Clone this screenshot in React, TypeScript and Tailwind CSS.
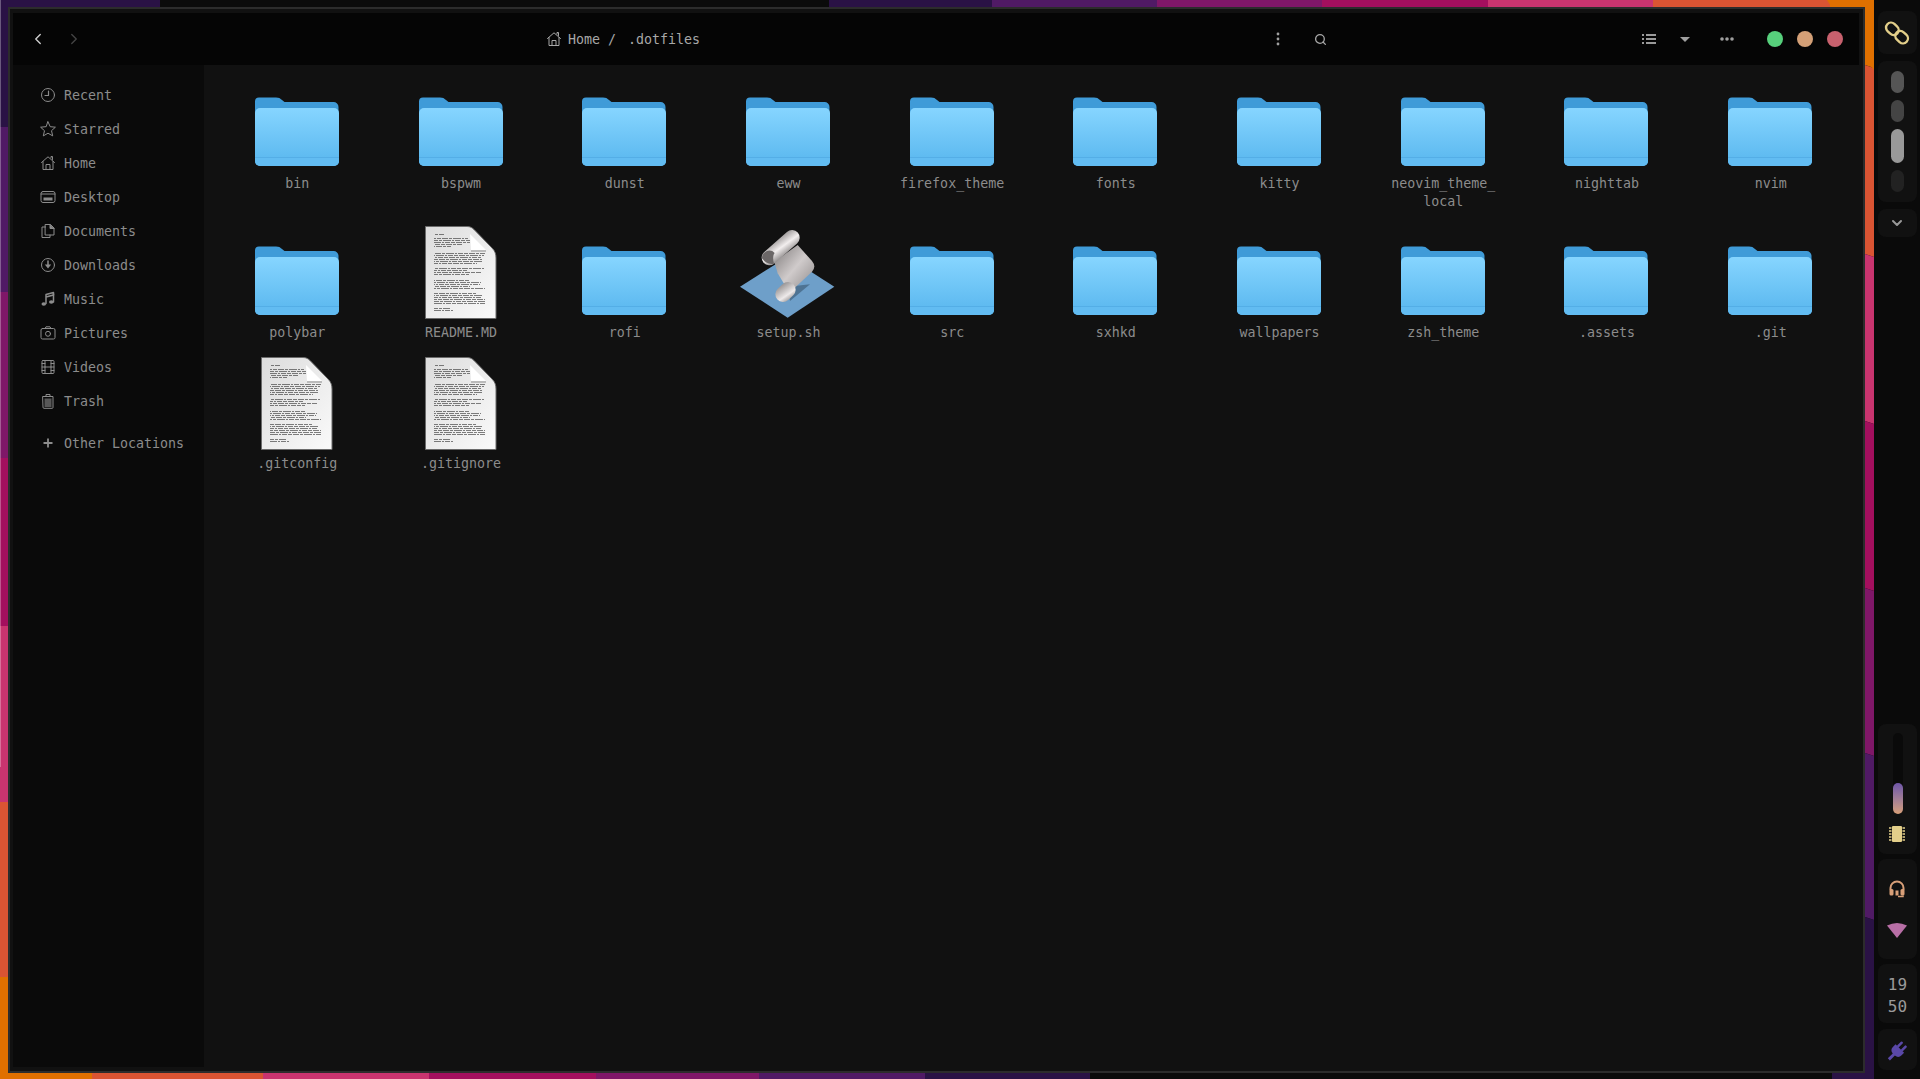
import { useId, type ReactNode } from "react";
import { ChevronDown, ChevronLeft, ChevronRight, Search } from "lucide-react";

const mono = "font-['DejaVu_Sans_Mono','Liberation_Mono',monospace]";

const C = {
  dark: "#2a1245",
  purple: "#501a65",
  magenta: "#7f1768",
  crimson: "#a30f5e",
  pink: "#c9346f",
  red: "#da5433",
  orange: "#e07000",
  black: "#0b0b0b",
};

// only the edges of the wallpaper show round the window
function Wallpaper() {
  const top: [number, number, string][] = [
    [0, 160, C.dark],
    [160, 829, C.black],
    [829, 992, C.dark],
    [992, 1157, C.purple],
    [1157, 1322, C.magenta],
    [1322, 1488, C.crimson],
    [1488, 1653, C.pink],
    [1653, 1830, C.red],
    [1830, 1874, C.orange],
  ];
  const bottom: [number, number, string][] = [
    [0, 92, C.orange],
    [92, 263, C.red],
    [263, 429, C.pink],
    [429, 596, C.crimson],
    [596, 759, C.magenta],
    [759, 925, C.purple],
    [925, 1090, C.dark],
    [1090, 1832, C.black],
    [1832, 1874, C.dark],
  ];
  const left: [number, number, string][] = [
    [0, 127, C.dark],
    [127, 292, C.purple],
    [292, 458, C.magenta],
    [458, 626, C.crimson],
    [626, 802, C.pink],
    [802, 977, C.red],
    [977, 1079, C.orange],
  ];
  const right: [number, number, string][] = [
    [0, 67, C.orange],
    [67, 256, C.red],
    [256, 423, C.pink],
    [423, 590, C.crimson],
    [590, 755, C.magenta],
    [755, 919, C.purple],
    [919, 1079, C.dark],
  ];
  return (
    <svg className="absolute inset-0" width={1920} height={1079} aria-hidden>
      {top.map(([a, b, f]) => (
        <rect key={a} x={a} y={0} width={b - a} height={8} fill={f} />
      ))}
      {bottom.map(([a, b, f]) => (
        <rect key={a} x={a} y={1071} width={b - a} height={8} fill={f} />
      ))}
      {left.map(([a, b, f]) => (
        <rect key={a} x={0} y={a} width={9} height={b - a} fill={f} />
      ))}
      {right.map(([a, b, f]) => (
        <polygon
          key={a}
          points={`1865,${a - 2} 1874,${a + 1} 1874,${b + 1} 1865,${b - 2}`}
          fill={f}
        />
      ))}
      <polygon points="1827,0 1874,0 1874,70 1864,58" fill={C.orange} />
      <rect x={0} y={0} width={1} height={767} fill="#fff" fillOpacity={0.3} />
    </svg>
  );
}

function Ico({ children }: { children: ReactNode }) {
  return (
    <svg
      width={16}
      height={16}
      viewBox="0 0 16 16"
      fill="none"
      stroke="currentColor"
      strokeWidth={1}
      strokeLinejoin="round"
      strokeLinecap="round"
      aria-hidden
    >
      {children}
    </svg>
  );
}

const HomeIcon = (
  <Ico>
    <path d="M1.5 7.5 8 1.8l6.5 5.7M3 6.500v8h10v-8M6 14.500V9.500h4v5M11 3V1.500h1.500v3" />
  </Ico>
);

const sidebarTop: { label: string; icon: ReactNode }[] = [
  {
    label: "Recent",
    icon: (
      <Ico>
        <circle cx={8} cy={8} r={6.5} />
        <path d="M8.500 4v4.500H5" strokeWidth={1.2} />
      </Ico>
    ),
  },
  {
    label: "Starred",
    icon: (
      <Ico>
        <path d="M8 .8l2.200 4.900 5.200.5-3.900 3.500 1.200 5.200L8 12.200l-4.700 2.700 1.200-5.200L.6 6.200l5.200-.5z" />
      </Ico>
    ),
  },
  { label: "Home", icon: HomeIcon },
  {
    label: "Desktop",
    icon: (
      <Ico>
        <rect x={1} y={2.500} width={14} height={11} rx={2} />
        <path d="M1 5h14" />
        <rect x={3.500} y={8.500} width={9} height={3} fill="currentColor" stroke="none" />
      </Ico>
    ),
  },
  {
    label: "Documents",
    icon: (
      <Ico>
        <path d="M5.500 4H2v10.500h8V12" />
        <path d="M5.500 1.500h5l3.500 3.500v7H5.500z" />
        <path d="M10 1.500V5.500h4" fill="currentColor" />
      </Ico>
    ),
  },
  {
    label: "Downloads",
    icon: (
      <Ico>
        <circle cx={8} cy={8} r={6.500} />
        <path d="M8 4v4.500" strokeWidth={1.500} />
        <path d="M4.800 7.500h6.400L8 11.500z" fill="currentColor" stroke="none" />
      </Ico>
    ),
  },
  {
    label: "Music",
    icon: (
      <Ico>
        <path d="M6 12.500V3.500l7.500-2v2.500L6 6" strokeWidth={1.500} />
        <path d="M13.500 3v8" strokeWidth={1.500} />
        <ellipse cx={3.800} cy={13} rx={2.300} ry={1.800} fill="currentColor" stroke="none" />
        <ellipse cx={11.300} cy={11} rx={2.300} ry={1.800} fill="currentColor" stroke="none" />
      </Ico>
    ),
  },
  {
    label: "Pictures",
    icon: (
      <Ico>
        <rect x={1} y={3.500} width={14} height={10.500} rx={1.500} />
        <path d="M5 3.500 6 1.800h4l1 1.700" />
        <circle cx={8} cy={8.800} r={2.500} />
      </Ico>
    ),
  },
  {
    label: "Videos",
    icon: (
      <Ico>
        <rect x={2} y={1.500} width={12} height={13} rx={1} />
        <path d="M5 1.500v13M11 1.500v13M5 8h6M2 4.500h3M2 8h3M2 11.500h3M11 4.500h3M11 8h3M11 11.500h3" />
      </Ico>
    ),
  },
  {
    label: "Trash",
    icon: (
      <Ico>
        <path d="M3 3.500h10v11a.8.8 0 0 1-.8.8H3.800a.8.8 0 0 1-.8-.8zM6 3.500V1.500h4v2" />
        <rect x={4.500} y={5.500} width={7} height={8.500} fill="currentColor" fillOpacity={0.6} stroke="none" />
      </Ico>
    ),
  },
];

function Sidebar() {
  return (
    <aside className={`flex w-[191px] shrink-0 flex-col bg-[#0a0a0a] pt-[13px] text-[13.3px] leading-[20px] text-[#8c8c8c] ${mono}`}>
      {sidebarTop.map((s) => (
        <div key={s.label} className="flex h-[34px] items-center">
          <span className="ml-[27px] flex w-[24px] shrink-0">{s.icon}</span>
          <span className="pt-[2px]">{s.label}</span>
        </div>
      ))}
      <div className="mt-[8px] flex h-[34px] items-center">
        <span className="ml-[27px] flex w-[24px] shrink-0">
          <Ico>
            <path d="M8 3.500v9M3.500 8h9" strokeWidth={1.800} strokeLinecap="butt" />
          </Ico>
        </span>
        <span className="pt-[2px]">Other Locations</span>
      </div>
    </aside>
  );
}

function Folder() {
  const id = useId();
  return (
    <svg width={96} height={96} viewBox="0 0 96 96" aria-hidden>
      <defs>
        <linearGradient id={`${id}f`} x1="0" y1="0" x2="0" y2="1">
          <stop offset="0" stopColor="#86d5ff" />
          <stop offset="1" stopColor="#58b6ee" />
        </linearGradient>
      </defs>
      <path
        d="M6 25.500a4 4 0 0 1 4-4h17c3 0 4 .8 6 2.500l2.500 2h49a5 5 0 0 1 5 5v12H6z"
        fill="#3f9bd8"
      />
      <rect x={6} y={32} width={84} height={58} rx={5} fill={`url(#${id}f)`} />
      <path d="M6 81h84v.8H6z" fill="#4ba5de" />
      <path d="M6 81.800h84V85a5 5 0 0 1-5 5H11a5 5 0 0 1-5-5z" fill="#62bcf2" />
    </svg>
  );
}

// rows of greeked text on the page icon: [y, width]
const docLines: [number, number][] = [
  [8, 10],
  [12, 34],
  [14, 36],
  [16, 36],
  [18, 28],
  [20, 17],
  [27, 51],
  [29, 50],
  [31, 47],
  [33, 48],
  [35, 49],
  [37, 43],
  [42, 51],
  [44, 33],
  [46, 47],
  [48, 35],
  [54, 35],
  [56, 47],
  [58, 46],
  [60, 36],
  [62, 51],
  [67, 42],
  [69, 49],
  [71, 48],
  [73, 51],
  [75, 51],
  [77, 51],
  [82, 16],
  [84, 19],
];

function Doc() {
  const id = useId();
  return (
    <svg width={96} height={96} viewBox="0 0 96 96" aria-hidden>
      <defs>
        <linearGradient id={`${id}p`} x1="0" y1="0" x2="1" y2="1">
          <stop offset="0" stopColor="#dcdcdc" />
          <stop offset="1" stopColor="#fafafa" />
        </linearGradient>
      </defs>
      <g transform="translate(12 1)">
        <path
          d="M.5.500H42c3 0 5 1 7 3L67 22c3 3 4 6 4 10v60.500H.5z"
          fill={`url(#${id}p)`}
          stroke="#6b6b6b"
          strokeWidth={1}
        />
        {docLines.map(([y, w]) => (
          <line
            key={y}
            x1={9}
            x2={9 + w}
            y1={y + 0.5}
            y2={y + 0.5}
            stroke="#3c3c3c"
            strokeOpacity={0.65}
            strokeWidth={1}
            strokeDasharray="6 1 3 1 8 1 2 1 5 1 4 1"
            strokeDashoffset={y * 5}
          />
        ))}
        <path d="M45 8 61 24H46z" fill="#fff" />
        <path d="M46 24h15v2H46z" fill="#bbb" />
      </g>
    </svg>
  );
}

function Script() {
  const id = useId();
  return (
    <svg width={96} height={96} viewBox="62 30 288 288" aria-hidden>
      <defs>
        <linearGradient id={`${id}b`} x1="0" y1="0" x2="1" y2="1">
          <stop offset="0" stopColor="#7c7878" />
          <stop offset="0.5" stopColor="#d0cbcb" />
          <stop offset="1" stopColor="#8a8686" />
        </linearGradient>
        <linearGradient id={`${id}r`} gradientUnits="userSpaceOnUse" x1="165" y1="70" x2="205" y2="125">
          <stop offset="0" stopColor="#8e8a8a" />
          <stop offset="0.5" stopColor="#f2eeee" />
          <stop offset="1" stopColor="#7c7878" />
        </linearGradient>
        <linearGradient id={`${id}c`} gradientUnits="userSpaceOnUse" x1="172" y1="212" x2="208" y2="264">
          <stop offset="0" stopColor="#8a8686" />
          <stop offset="0.65" stopColor="#eeeaea" />
          <stop offset="1" stopColor="#8a8686" />
        </linearGradient>
      </defs>
      <polygon points="62,215 205,125 345,215 205,308" fill="#6e9fc9" />
      <polygon points="205,215 272,208 212,258" fill="#4e7393" />
      <path
        d="M165 140 235 90 278 138Q292 155 278 170L212 232Q192 205 175 175Z"
        fill={`url(#${id}b)`}
      />
      <line x1={191} y1={238} x2={206} y2={224} stroke={`url(#${id}c)`} strokeWidth={46} strokeLinecap="round" />
      <line x1={150} y1={128} x2={218} y2={68} stroke={`url(#${id}r)`} strokeWidth={46} strokeLinecap="round" />
      <path d="M128 130a22 22 0 0 1 38-16q-8 10-2 32-22 4-36-16" fill="#6b6767" />
    </svg>
  );
}

type Item = { name: string; icon: "folder" | "doc" | "script" };

const items: Item[] = [
  { name: "bin", icon: "folder" },
  { name: "bspwm", icon: "folder" },
  { name: "dunst", icon: "folder" },
  { name: "eww", icon: "folder" },
  { name: "firefox_theme", icon: "folder" },
  { name: "fonts", icon: "folder" },
  { name: "kitty", icon: "folder" },
  { name: "neovim_theme_local", icon: "folder" },
  { name: "nighttab", icon: "folder" },
  { name: "nvim", icon: "folder" },
  { name: "polybar", icon: "folder" },
  { name: "README.MD", icon: "doc" },
  { name: "rofi", icon: "folder" },
  { name: "setup.sh", icon: "script" },
  { name: "src", icon: "folder" },
  { name: "sxhkd", icon: "folder" },
  { name: "wallpapers", icon: "folder" },
  { name: "zsh_theme", icon: "folder" },
  { name: ".assets", icon: "folder" },
  { name: ".git", icon: "folder" },
  { name: ".gitconfig", icon: "doc" },
  { name: ".gitignore", icon: "doc" },
];

function Header() {
  return (
    <header className={`flex h-[52px] shrink-0 items-center bg-[#050505] text-[13.3px] leading-[20px] text-[#a8a8a8] ${mono}`}>
      <ChevronLeft size={18} strokeWidth={1.8} className="ml-[16px] text-[#d0d0d0]" />
      <ChevronRight size={18} strokeWidth={1.8} className="ml-[18px] text-[#444]" />
      <span className="ml-[463px] flex w-[16px] text-[#a8a8a8]">{HomeIcon}</span>
      <span className="ml-[6px] pt-[2px]">Home</span>
      <span className="ml-[8px] pt-[2px]">/</span>
      <span className="ml-[12px] pt-[2px]">.dotfiles</span>
      <svg width={4} height={14} viewBox="0 0 4 14" className="ml-[576px]" fill="#a0a0a0" aria-hidden>
        <circle cx={2} cy={2} r={1.400} />
        <circle cx={2} cy={7} r={1.400} />
        <circle cx={2} cy={12} r={1.400} />
      </svg>
      <Search size={13} strokeWidth={2.4} className="ml-[34px] text-[#a8a8a8]" />
      <svg width={14} height={12} viewBox="0 0 14 12" className="ml-[315px]" fill="#9a9a9a" aria-hidden>
        <rect x={0} y={1} width={2} height={2} />
        <rect x={0} y={5} width={2} height={2} />
        <rect x={0} y={9} width={2} height={2} />
        <rect x={4} y={1} width={10} height={2} />
        <rect x={4} y={5} width={10} height={2} />
        <rect x={4} y={9} width={10} height={2} />
      </svg>
      <svg width={10} height={5} viewBox="0 0 10 5" className="ml-[24px]" fill="#a0a0a0" aria-hidden>
        <path d="M0 0h10L5 5z" />
      </svg>
      <svg width={14} height={4} viewBox="0 0 14 4" className="ml-[30px]" fill="#a0a0a0" aria-hidden>
        <circle cx={2} cy={2} r={1.800} />
        <circle cx={7} cy={2} r={1.800} />
        <circle cx={12} cy={2} r={1.800} />
      </svg>
      <span className="ml-[33px] h-4 w-4 rounded-full bg-[#57d07c]" />
      <span className="ml-[14px] h-4 w-4 rounded-full bg-[#d4a077]" />
      <span className="ml-[14px] h-4 w-4 rounded-full bg-[#c8616e]" />
    </header>
  );
}

function Box({ className, children }: { className: string; children: ReactNode }) {
  return (
    <div className={`flex w-[39px] flex-col items-center rounded-lg bg-[#111111] ${className}`}>{children}</div>
  );
}

function Bar() {
  return (
    <aside className={`relative flex w-[46px] shrink-0 flex-col justify-between bg-[#0a0a0a] pt-[11px] pb-[9px] pl-[4px] ${mono}`}>
      <div className="flex flex-col gap-[7px]">
        <Box className="h-[43px] justify-center pt-[1px]">
          <svg width={24} height={24} viewBox="0 0 24 24" fill="none" stroke="#e3cf8a" strokeWidth={2.400} className="mr-[2px] overflow-visible" aria-hidden>
            <g transform="rotate(42 12 12)">
              <rect x={-1} y={7} width={13.500} height={10} rx={5} />
              <rect x={11.500} y={7} width={13.500} height={10} rx={5} />
            </g>
          </svg>
        </Box>
        <Box className="h-[141px] gap-[7px] pt-[10px]">
          <span className="h-[22px] w-[13px] rounded-full bg-[#555555]" />
          <span className="h-[22px] w-[13px] rounded-full bg-[#444444]" />
          <span className="h-[34px] w-[13px] rounded-full bg-[#999999]" />
          <span className="h-[22px] w-[13px] rounded-full bg-[#222222]" />
        </Box>
        <Box className="h-[28px] justify-center">
          <ChevronDown size={16} strokeWidth={3} className="mr-[2px] text-[#999]" />
        </Box>
      </div>
      <div className="flex flex-col gap-[5px]">
        <Box className="h-[130px] pt-[9px]">
          <div className="flex h-[81px] w-[10px] flex-col justify-end rounded-full bg-[#0a0a0a]">
            <div className="h-[31px] rounded-full bg-gradient-to-b from-[#6f55a8] to-[#d89f78]" />
          </div>
          <svg width={16} height={16} viewBox="0 0 16 16" className="mt-[12px] mr-[1px]" aria-hidden>
            <rect x={3} y={0} width={10} height={16} rx={1} fill="#e3cf8a" />
            <path d="M0 2h2.500M0 5h2.500M0 8h2.500M0 11h2.500M0 14h2.500M13.500 2H16M13.500 5H16M13.500 8H16M13.500 11H16M13.500 14H16" stroke="#e3cf8a" strokeWidth={1.500} />
          </svg>
        </Box>
        <Box className="h-[100px] pt-[21px]">
          <svg width={16} height={18} viewBox="0 0 16 18" fill="none" className="mr-[2px]" aria-hidden>
            <path d="M1.500 10V8a6.500 6.500 0 0 1 13 0v2" stroke="#d89f78" strokeWidth={2} />
            <rect x={0.500} y={9} width={4} height={6.500} rx={1.500} fill="#d89f78" />
            <rect x={11.500} y={9} width={4} height={6.500} rx={1.500} fill="#d89f78" />
            <path d="M14 15.500v1H9" stroke="#d89f78" strokeWidth={1.500} />
            <path d="M6.500 10.500h3v5h-3z" fill="#d89f78" />
          </svg>
          <svg width={20} height={16} viewBox="0 0 20 16" className="mt-[24px] mr-[1px]" aria-hidden>
            <path d="M0 3.500Q10-1.500 20 3.500L10 16z" fill="#b86fa6" />
          </svg>
        </Box>
        <Box className="h-[59px] justify-center pt-[5px] text-[16px] leading-[22px] text-[#9a9a9a]">
          <span>19</span>
          <span>50</span>
        </Box>
        <Box className="mt-px h-[41px] justify-center pt-[5px]">
          <svg width={20} height={20} viewBox="0 0 20 20" className="mr-[2px] overflow-visible" aria-hidden>
            <g transform="rotate(45 10 10)" fill="#5a48a8">
              <rect x={5.500} y={-1} width={2.500} height={7} rx={1} />
              <rect x={11} y={-1} width={2.500} height={7} rx={1} />
              <path d="M3.500 5.500h12V9a5 5 0 0 1-4.500 5v7H8v-7a5 5 0 0 1-4.500-5z" />
            </g>
          </svg>
        </Box>
      </div>
    </aside>
  );
}

export default function App() {
  return (
    <div className="relative flex h-[1079px] w-[1920px] overflow-hidden bg-[#0b0b0b]">
      <Wallpaper />
      <main className="relative mt-[7px] mb-[6px] ml-[8px] flex w-[1857px] flex-col border-2 border-[#2c2c2c] bg-[#111111] pt-[4px] pr-[4px] pb-[4px] pl-[3px]">
        <Header />
        <div className="flex min-h-0 flex-1">
          <Sidebar />
          <div className={`grid flex-1 grid-cols-10 content-start items-start gap-y-[14px] pt-[11px] pr-[7px] pl-[11px] text-[13.3px] leading-[18px] text-[#8c8c8c] ${mono}`}>
            {items.map((it) => (
              <div key={it.name} className="flex flex-col items-center">
                {it.icon === "folder" && <Folder />}
                {it.icon === "doc" && <Doc />}
                {it.icon === "script" && <Script />}
                <span className="mt-[3px] w-[108px] pl-[1px] text-center break-all">{it.name}</span>
              </div>
            ))}
          </div>
        </div>
      </main>
      <div className="ml-auto flex">
        <Bar />
      </div>
    </div>
  );
}
